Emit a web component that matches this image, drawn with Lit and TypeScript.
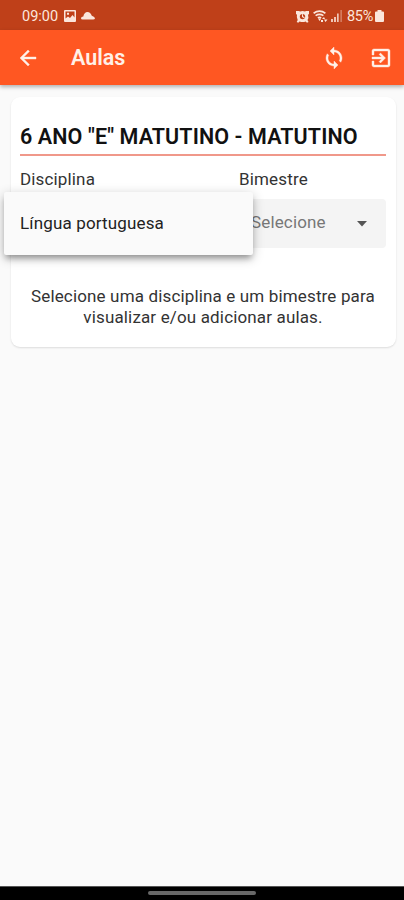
import { LitElement, html, css, svg } from "lit";
import { customElement } from "lit/decorators.js";

@customElement("app-root")
export class AppRoot extends LitElement {
  static styles = css`
    :host {
      display: flex;
      flex-direction: column;
      height: 900px;
      overflow: hidden;
      background: #fafafa;
      color: #222;
      font-family: Roboto, sans-serif;
      font-size: 17px;
      letter-spacing: 0.15px;
    }
    * { box-sizing: border-box; }
    svg { display: block; flex: none; fill: currentColor; }
    .status {
      height: 30px;
      flex: none;
      display: flex;
      align-items: center;
      padding: 2px 20px 0 22px;
      background: #bf4019;
      color: #fbe6dc;
      font-size: 14.5px;
      letter-spacing: 0;
    }
    .clock { width: 42px; }
    .cloud { margin-left: 5px; }
    .signals { margin-left: auto; display: flex; align-items: center; }
    .wifi { margin-left: 4px; }
    .bars { margin-left: 3px; }
    .charge { margin-left: 5px; font-size: 14.5px; letter-spacing: -0.3px; }
    .battery { margin-left: 2px; }
    .bar {
      height: 55px;
      flex: none;
      display: flex;
      align-items: center;
      padding: 0 11px 0 16px;
      background: #ff5722;
      color: #fff0e8;
      box-shadow: 0 2px 4px rgba(0, 0, 0, 0.3);
      z-index: 1;
    }
    .bar svg { stroke: currentColor; stroke-width: 0.4; }
    .bar h1 {
      margin: 0 auto 0 31px;
      font-size: 21.5px;
      line-height: 26px;
      font-weight: 600;
      letter-spacing: 0;
    }
    .exit { margin-left: 23px; }
    .content { flex: 1; padding: 12px 8px 0 11px; }
    .card {
      height: 250px;
      padding: 26px 10px 0 9px;
      border-radius: 9px;
      background: #fff;
      box-shadow: 0 1px 2px rgba(0, 0, 0, 0.12);
    }
    h2 {
      margin: 0;
      height: 33px;
      border-bottom: 2px solid #f0988a;
      color: #111;
      font-size: 21.5px;
      line-height: 28px;
      font-weight: 600;
      letter-spacing: 0.1px;
      white-space: nowrap;
    }
    .fields { display: flex; height: 119px; padding-top: 12px; }
    .field { position: relative; width: 219px; }
    .field.term { width: 147px; }
    .label { line-height: 22px; color: #333; }
    .select {
      display: flex;
      align-items: center;
      justify-content: space-between;
      height: 49px;
      margin-top: 9px;
      padding: 0 18px 3px 12px;
      border-radius: 4px;
      background: #f4f4f4;
      color: #777;
    }
    .select svg { margin-top: 3px; color: #555; }
    .menu {
      position: absolute;
      left: -16px;
      top: 24px;
      width: 249px;
      height: 63px;
      padding-left: 16px;
      border-radius: 2px;
      background: #fafafa;
      line-height: 62px;
      color: #222;
      z-index: 2;
      box-shadow: 0 5px 6px -2px rgba(0, 0, 0, 0.3), 0 3px 12px rgba(0, 0, 0, 0.24);
    }
    .hint {
      margin: 11px 0 0;
      text-align: center;
      line-height: 20.5px;
      color: #333;
      white-space: nowrap;
    }
    .nav {
      height: 14px;
      flex: none;
      display: flex;
      align-items: center;
      justify-content: center;
      padding-bottom: 1px;
      background: #000;
      border-top: 1px solid #555;
    }
    .handle { width: 108px; height: 4px; border-radius: 2px; background: #686868; }
  `;

  private icon(d: string, size: number, name = "") {
    return html`<svg class=${name} width=${size} height=${size} viewBox="0 0 24 24">${svg`<path d=${d} />`}</svg>`;
  }

  render() {
    return html`
      <div class="status">
        <span class="clock">09:00</span>
        <svg width="12" height="12" viewBox="0 0 12 12"><path fill-rule="evenodd" d="M1 0h10q1 0 1 1v10q0 1-1 1H1q-1 0-1-1V1q0-1 1-1zM1.500 1.500v7l2.500-2 2 1.500 2.500-3 2 2.500v-6zM3 2.800h2v2H3z" /></svg>
        <svg class="cloud" width="14" height="8" viewBox="0 0 14 8"><path d="M1.500 7.500Q0 7.500 0 6.200T2.300 4.500Q3.200 0 6.500 0q3 .2 4.300 3.700Q14 5 14 6.500 13.700 7.500 12 7.500z" /></svg>
        <div class="signals">
          <svg width="13" height="13" viewBox="0 0 13 13"><path fill-rule="evenodd" d="M0 1h3l1 .6Q6.500 .5 9 1.600L10 1h3v3l-1 .8q1 3-.5 5.200l1 2-1.500.7-1.400-1.300q-3 1.400-6 0L2.200 12.700.700 12l1-2Q.3 7.500 1 4.800L0 4zM6.500 3.900a2.700 2.700 0 1 0 0 5.400 2.700 2.700 0 0 0 0-5.400zM6 4.300h1v2l1.700 1-.5.9L6 6.900z" /></svg>
          <svg class="wifi" width="15" height="13" viewBox="0 0 15 13"><path fill="none" stroke="currentColor" stroke-width="1.700" d="M.6 3.200Q6.500-.8 12.400 3.200M2.600 5.600Q6.500 3 10.400 5.600M4.800 7.800q1.700-1 3.400 0" /><path d="M5 8.500h3.200L6.600 11zM9 9l2-2 1 2zM11 9.500h3.500l-2 2.500zM8 10h2v2H8z" /></svg>
          <svg class="bars" width="11" height="12" viewBox="0 0 11 12"><path opacity=".8" d="M0 9h2v3H0zM3 7h2v5H3zM6 3.500h1.700V12H6z" /><path opacity=".35" d="M9.300 0H11v12H9.300z" /></svg>
          <span class="charge">85%</span>
          <svg class="battery" width="9" height="12" viewBox="0 0 9 12"><path d="M2.500 0h4v1.500H8q1 0 1 1V11q0 1-1 1H1q-1 0-1-1V2.500q0-1 1-1h1.500z" /></svg>
        </div>
      </div>
      <header class="bar">
        ${this.icon("M20 11H7.830l5.590-5.590L12 4l-8 8 8 8 1.410-1.410L7.830 13H20v-2z", 24)}
        <h1>Aulas</h1>
        ${this.icon("M12 4V1L8 5l4 4V6c3.310 0 6 2.690 6 6 0 1.010-.25 1.970-.7 2.800l1.460 1.460C19.540 15.030 20 13.570 20 12c0-4.420-3.580-8-8-8zm0 14c-3.310 0-6-2.690-6-6 0-1.010.25-1.970.7-2.800L5.240 7.740C4.460 8.970 4 10.430 4 12c0 4.420 3.580 8 8 8v3l4-4-4-4v3z", 24)}
        ${this.icon("M10.090 15.590L11.500 17l5-5-5-5-1.410 1.410L12.670 11H3v2h9.670l-2.580 2.590zM19 3H5c-1.110 0-2 .9-2 2v4h2V5h14v14H5v-4H3v4c0 1.100.89 2 2 2h14c1.100 0 2-.9 2-2V5c0-1.100-.9-2-2-2z", 24, "exit")}
      </header>
      <main class="content">
        <section class="card">
          <h2>6 ANO "E" MATUTINO - MATUTINO</h2>
          <div class="fields">
            <div class="field">
              <div class="label">Disciplina</div>
              <div class="menu">Língua portuguesa</div>
            </div>
            <div class="field term">
              <div class="label">Bimestre</div>
              <div class="select">
                <span>Selecione</span>
                <svg width="12" height="6" viewBox="0 0 12 6"><path d="M1 0h10L6 5.500z" /></svg>
              </div>
            </div>
          </div>
          <p class="hint">Selecione uma disciplina e um bimestre para<br />visualizar e/ou adicionar aulas.</p>
        </section>
      </main>
      <div class="nav"><div class="handle"></div></div>
    `;
  }
}
